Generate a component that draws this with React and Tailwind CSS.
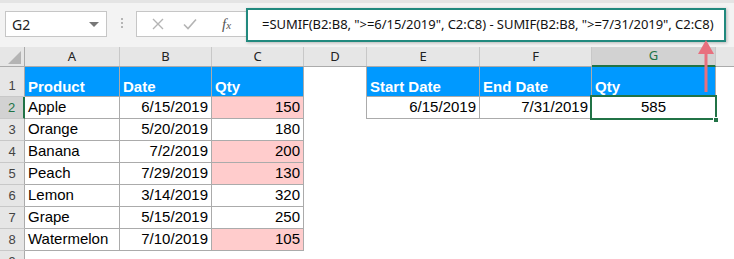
import React from 'react'

const colHeads = [
  { k: 'A', w: 'w-[95px]' },
  { k: 'B', w: 'w-[92px]' },
  { k: 'C', w: 'w-[92px]' },
  { k: 'D', w: 'w-[63px]' },
  { k: 'E', w: 'w-[113px]' },
  { k: 'F', w: 'w-[112px]' },
  { k: 'G', w: 'w-[124px]' },
]

const products = [
  ['Apple', '6/15/2019', '150', true],
  ['Orange', '5/20/2019', '180', false],
  ['Banana', '7/2/2019', '200', true],
  ['Peach', '7/29/2019', '130', true],
  ['Lemon', '3/14/2019', '320', false],
  ['Grape', '5/15/2019', '250', false],
  ['Watermelon', '7/10/2019', '105', true],
]

const grid = 'border-r border-b border-[#ababab]'
const head = 'bg-[#0099ff] text-white font-bold'

const RowHead = ({ n, tall, active }) => (
  <div
    className={
      'w-[25px] shrink-0 flex items-end justify-center border-b border-[#c8c8c8] text-[13px] leading-[18px] ' +
      (tall ? 'h-[30px] pb-[1px] ' : 'h-[22px] pb-[1px] ') +
      (active
        ? 'bg-[#d2d2d2] text-[#217346] border-r-2 border-r-[#217346]'
        : 'bg-[#e6e6e6] text-[#444] border-r border-r-[#ababab]')
    }
  >
    {n}
  </div>
)

export default function App() {
  return (
    <div className="relative w-[734px] h-[259px] overflow-hidden bg-white font-['Liberation_Sans',Arial,sans-serif]">
      {/* formula bar */}
      <div className="h-[47px] bg-[#f3f3f3] flex items-start border-t-[3px] border-[#e4e4e4]">
        <div className="ml-[5px] mt-[8px] w-[102px] h-[26px] bg-white border border-[#c6c6c6] flex items-center justify-between pl-[6px] pr-[7px]">
          <span className="font-['Noto_Sans',sans-serif] text-[14px] text-[#222]">G2</span>
          <span className="w-0 h-0 border-l-[5px] border-r-[5px] border-t-[5px] border-l-transparent border-r-transparent border-t-[#777]" />
        </div>
        <div className="ml-[14px] mt-[15px] flex flex-col gap-[2px]">
          <span className="w-[2px] h-[2px] bg-[#b5b5b5]" />
          <span className="w-[2px] h-[2px] bg-[#b5b5b5]" />
          <span className="w-[2px] h-[2px] bg-[#b5b5b5]" />
        </div>
        <div className="ml-[13px] mt-[8px] w-[112px] h-[26px] bg-white border border-[#c6c6c6] border-r-0 flex items-center">
          <svg width="12" height="12" viewBox="0 0 12 12" className="ml-[15px]">
            <path d="M1 1L11 11M11 1L1 11" stroke="#b4b4b4" strokeWidth="1.4" />
          </svg>
          <svg width="14" height="12" viewBox="0 0 14 12" className="ml-[19px]">
            <path d="M1 6.5L5 10.5L13 1.5" stroke="#b4b4b4" strokeWidth="1.6" fill="none" />
          </svg>
          <span className="ml-[25px] font-['Liberation_Serif',serif] italic text-[15px] text-[#555]">
            f<span className="text-[11px]">x</span>
          </span>
        </div>
        <div className="mt-[5px] -ml-[2px] w-[480px] h-[34px] bg-white border-2 border-[#21897e] shadow-[1px_1px_3px_rgba(0,0,0,0.25)] flex items-center pl-[14px]">
          <span className="font-['Noto_Sans',sans-serif] text-[13px] text-[#111] whitespace-nowrap tracking-[-0.05px]">
            =SUMIF(B2:B8, "&gt;=6/15/2019", C2:C8) - SUMIF(B2:B8, "&gt;=7/31/2019", C2:C8)
          </span>
        </div>
      </div>

      {/* column headers */}
      <div className="flex h-[20px] bg-[#e6e6e6] border-b border-[#ababab] text-[13px] text-[#222] font-['Noto_Sans',sans-serif]">
        <div className="w-[25px] shrink-0 border-r border-[#ababab] flex items-end justify-end pr-[3px] pb-[2px]">
          <svg width="13" height="13" viewBox="0 0 13 13">
            <path d="M13 0L13 13L0 13Z" fill="#b4b4b4" />
          </svg>
        </div>
        {colHeads.map((c) => (
          <div
            key={c.k}
            className={
              c.w +
              ' shrink-0 flex items-center justify-center border-r border-[#c8c8c8] ' +
              (c.k === 'G' ? 'bg-[#d2d2d2] text-[#217346] border-b-2 border-b-[#217346] -mb-[1px]' : '')
            }
          >
            {c.k}
          </div>
        ))}
      </div>

      {/* row 1 */}
      <div className="flex text-[15px] leading-[18px] text-black">
        <RowHead n={1} tall />
        <div className={'w-[95px] h-[30px] flex items-end pl-[3px] ' + grid + ' ' + head}>Product</div>
        <div className={'w-[92px] h-[30px] flex items-end pl-[3px] ' + grid + ' ' + head}>Date</div>
        <div className={'w-[92px] h-[30px] flex items-end pl-[3px] ' + grid + ' ' + head}>Qty</div>
        <div className="w-[63px] h-[30px] border-r border-[#ababab]" />
        <div className={'w-[113px] h-[30px] flex items-end pl-[3px] ' + grid + ' ' + head}>Start Date</div>
        <div className={'w-[112px] h-[30px] flex items-end pl-[3px] ' + grid + ' ' + head}>End Date</div>
        <div className={'w-[124px] h-[30px] flex items-end pl-[3px] ' + grid + ' ' + head}>Qty</div>
      </div>

      {/* rows 2 - 8 */}
      {products.map((p, i) => (
        <div key={p[0]} className="flex text-[15px] leading-[18px] text-black">
          <RowHead n={i + 2} active={i === 0} />
          <div className={'w-[95px] h-[22px] flex items-end pl-[3px] pb-[2px] ' + grid}>{p[0]}</div>
          <div className={'w-[92px] h-[22px] flex items-end justify-end pr-[3px] pb-[2px] ' + grid}>{p[1]}</div>
          <div
            className={
              'w-[92px] h-[22px] flex items-end justify-end pr-[3px] pb-[2px] ' +
              grid +
              (p[3] ? ' bg-[#ffcccc]' : '')
            }
          >
            {p[2]}
          </div>
          {i === 0 && (
            <>
              <div className="w-[63px] h-[22px] border-r border-[#ababab]" />
              <div className={'w-[113px] h-[22px] flex items-end justify-end pr-[3px] pb-[2px] ' + grid}>6/15/2019</div>
              <div className={'w-[112px] h-[22px] flex items-end justify-end pr-[3px] pb-[2px] ' + grid}>7/31/2019</div>
              <div className={'w-[124px] h-[22px] flex items-end justify-center pb-[2px] ' + grid}>585</div>
            </>
          )}
        </div>
      ))}

      {/* row 9 */}
      <div className="flex">
        <RowHead n={9} />
      </div>

      {/* selection on G2 */}
      <div className="absolute left-[590px] top-[95px] w-[127px] h-[25px] border-2 border-[#217346]" />
      <div className="absolute left-[713px] top-[117px] w-[6px] h-[6px] bg-[#217346] border border-white" />

      {/* pointer arrow */}
      <svg className="absolute left-[697px] top-[40px]" width="18" height="54" viewBox="0 0 18 54">
        <path d="M9 0L1 14L17 14Z" fill="#e8707e" />
        <rect x="7.5" y="12" width="3" height="40" fill="#e8707e" />
      </svg>
    </div>
  )
}
